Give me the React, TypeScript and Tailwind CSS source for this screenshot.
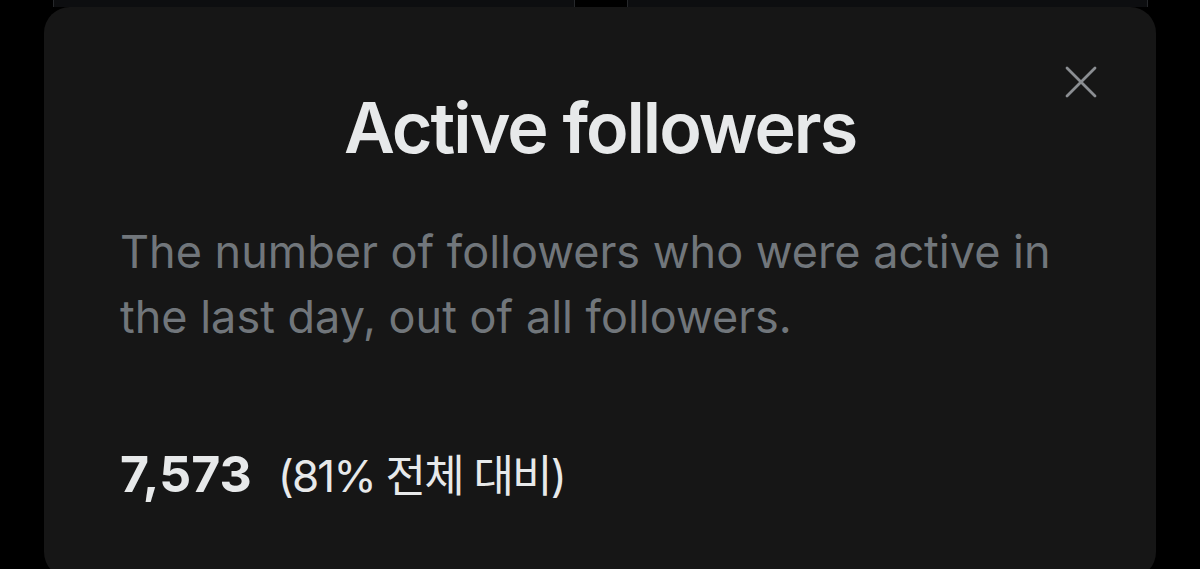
import React from "react";

export default function App() {
  return (
    <div
      className="w-[1200px] h-[569px] bg-black overflow-hidden"
      style={{ fontFamily: 'Inter, "Noto Sans CJK KR", sans-serif' }}
    >
      <div className="flex h-[7px]">
        <div className="ml-[53px] w-[522px] bg-[#0d0e10] border-x border-[#26282b]" />
        <div className="ml-[52px] w-[521px] bg-[#0d0e10] border-x border-[#26282b]" />
      </div>
      <div className="relative ml-[44px] w-[1112px] h-[571px] rounded-[26px] bg-[#161616] px-[76px]">
        <button className="absolute top-[59px] right-[59px] w-[32px] h-[32px] flex items-center justify-center">
          <svg width="32" height="32" viewBox="0 0 32 32" fill="none">
            <path
              d="M2 2 L30 30 M30 2 L2 30"
              stroke="#8b8e92"
              strokeWidth="2.8"
              strokeLinecap="round"
            />
          </svg>
        </button>
        <h1 className="pt-[85px] text-center text-[70px] leading-[72px] font-semibold text-[#e7e9ea] tracking-[-2px]">
          Active followers
        </h1>
        <p className="mt-[55px] text-[45px] leading-[65px] text-[#71767b]">
          The number of followers who were active in the last day, out of all followers.
        </p>
        <div className="mt-[95px] flex items-baseline text-[#e7e9ea]">
          <span className="text-[50px] leading-[60px] font-bold">7,573</span>
          <span className="ml-[26px] text-[44px] leading-[60px] tracking-[-1.8px]">(81% 전체 대비)</span>
        </div>
      </div>
    </div>
  );
}
